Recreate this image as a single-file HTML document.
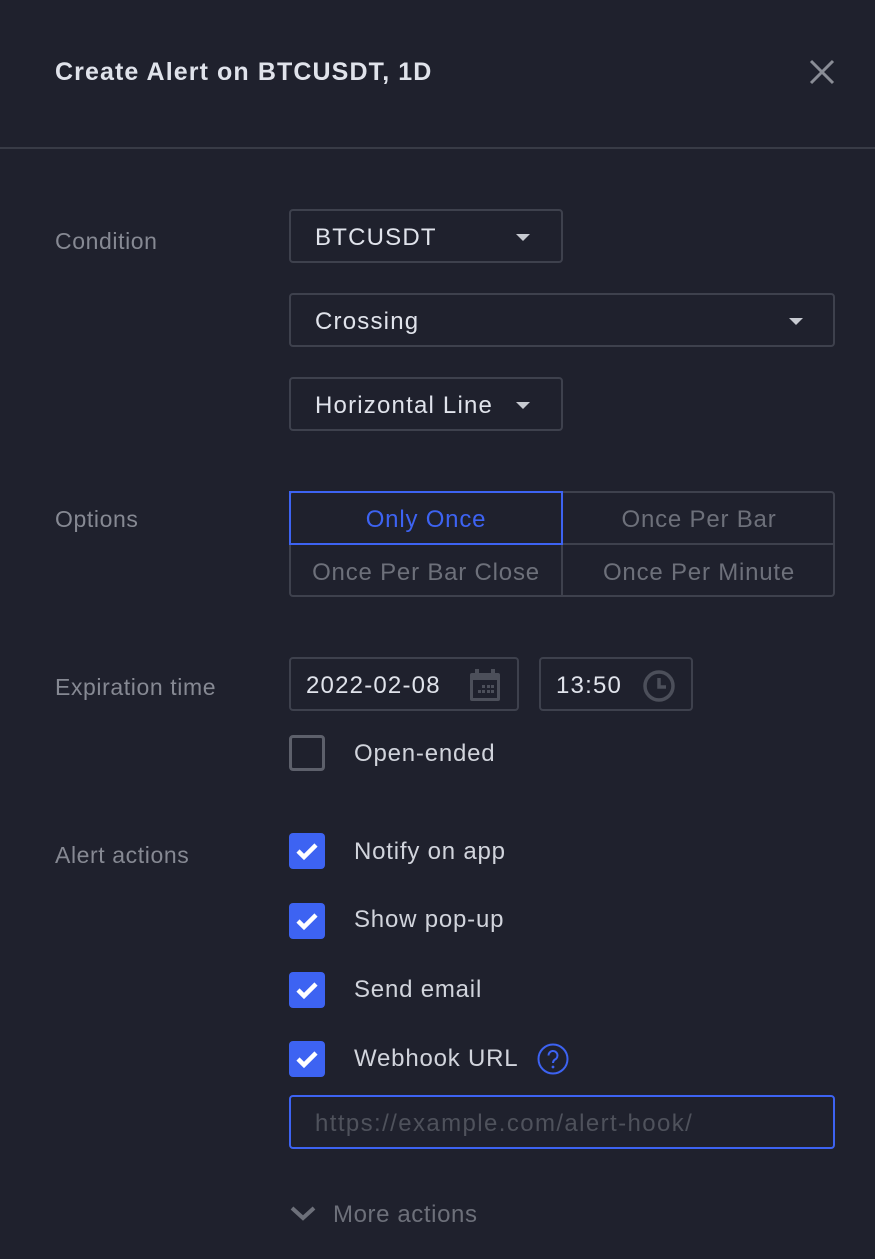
<!DOCTYPE html>
<html><head><style>
*{box-sizing:border-box;margin:0;padding:0}
body{width:875px;height:1259px;background:#1f212d;font-family:"Liberation Sans","DejaVu Sans",sans-serif;position:relative;overflow:hidden;color:#d1d4dc;letter-spacing:1px}
.a{position:absolute}
.lbl{color:#868993;font-size:23px;letter-spacing:0.6px}
.box{position:absolute;border:2px solid #3e414d;border-radius:4px;font-size:24px;color:#e0e3eb;display:flex;align-items:center;padding-left:24px;padding-top:3px;letter-spacing:1.2px}
.caret{position:absolute;width:0;height:0;border-left:7px solid transparent;border-right:7px solid transparent;border-top:7px solid #c7cad1}
.cb{position:absolute;left:289px;width:36px;height:36px;border-radius:4px;background:#3d63f2}
.cbt{position:absolute;left:354px;font-size:24px;color:#d1d4dc;letter-spacing:0.8px}
.opt{position:absolute;display:flex;align-items:center;justify-content:center;font-size:24px;color:#6d707a;padding-top:3px;letter-spacing:0.8px}
</style></head><body>
<div class="a" style="left:55px;top:58px;font-size:25px;font-weight:bold;color:#e0e3eb;letter-spacing:1.1px">Create Alert on BTCUSDT, 1D</div>
<svg class="a" style="left:808px;top:58px" width="28" height="28" viewBox="0 0 28 28"><path d="M3 3L25 25M25 3L3 25" stroke="#8a8d96" stroke-width="3"/></svg>
<div class="a" style="left:0;top:147px;width:875px;height:2px;background:#383b46"></div>

<div class="a lbl" style="left:55px;top:228px">Condition</div>
<div class="box" style="left:289px;top:209px;width:274px;height:54px">BTCUSDT</div><div class="caret" style="left:516px;top:234px"></div>
<div class="box" style="left:289px;top:293px;width:546px;height:54px">Crossing</div><div class="caret" style="left:789px;top:318px"></div>
<div class="box" style="left:289px;top:377px;width:274px;height:54px">Horizontal Line</div><div class="caret" style="left:516px;top:402px"></div>

<div class="a lbl" style="left:55px;top:506px">Options</div>
<div class="a" style="left:289px;top:491px;width:546px;height:106px;border:2px solid #3e414d;border-radius:4px"></div>
<div class="a" style="left:561px;top:491px;width:2px;height:106px;background:#3e414d"></div>
<div class="a" style="left:289px;top:543px;width:546px;height:2px;background:#3e414d"></div>
<div class="opt" style="left:289px;top:491px;width:274px;height:54px;border:2px solid #3d63f2;color:#3d63f2">Only Once</div>
<div class="opt" style="left:563px;top:491px;width:272px;height:54px">Once Per Bar</div>
<div class="opt" style="left:289px;top:545px;width:274px;height:52px">Once Per Bar Close</div>
<div class="opt" style="left:563px;top:545px;width:272px;height:52px">Once Per Minute</div>

<div class="a lbl" style="left:55px;top:674px">Expiration time</div>
<div class="box" style="left:289px;top:657px;width:230px;height:54px;padding-left:15px">2022-02-08</div>
<svg class="a" style="left:469px;top:668px" width="32" height="34" viewBox="0 0 32 34"><rect x="1" y="5" width="30" height="28" rx="2" fill="#4c4f5a"/><rect x="6" y="1" width="4" height="7" fill="#4c4f5a"/><rect x="22" y="1" width="4" height="7" fill="#4c4f5a"/><rect x="4" y="12" width="24" height="18" fill="#1f212d"/><g fill="#4c4f5a"><rect x="13" y="17" width="3" height="3"/><rect x="18" y="17" width="3" height="3"/><rect x="22" y="17" width="3" height="3"/><rect x="9" y="22" width="3" height="3"/><rect x="13" y="22" width="3" height="3"/><rect x="18" y="22" width="3" height="3"/><rect x="22" y="22" width="3" height="3"/></g></svg>
<div class="box" style="left:539px;top:657px;width:154px;height:54px;padding-left:15px">13:50</div>
<svg class="a" style="left:642px;top:669px" width="34" height="34" viewBox="0 0 34 34"><circle cx="17" cy="17" r="14" fill="none" stroke="#4c4f5a" stroke-width="3.5"/><path d="M17 9V18H24" fill="none" stroke="#4c4f5a" stroke-width="3.5"/></svg>
<div class="a" style="left:289px;top:735px;width:36px;height:36px;border:3px solid #5d606b;border-radius:4px"></div>
<div class="cbt" style="top:740px">Open-ended</div>

<div class="a lbl" style="left:55px;top:842px">Alert actions</div>
<div class="cb" style="top:833px"></div><div class="cbt" style="top:838px">Notify on app</div>
<div class="cb" style="top:903px"></div><div class="cbt" style="top:906px">Show pop-up</div>
<div class="cb" style="top:972px"></div><div class="cbt" style="top:976px">Send email</div>
<div class="cb" style="top:1041px"></div><div class="cbt" style="top:1045px">Webhook URL</div>
<svg class="a" style="left:289px;top:833px" width="36" height="280"><g fill="none" stroke="#fff" stroke-width="4.5"><path d="M9 18L15 24L27 12"/><path d="M9 88L15 94L27 82"/><path d="M9 157L15 163L27 151"/><path d="M9 226L15 232L27 220"/></g></svg>
<svg class="a" style="left:537px;top:1043px" width="32" height="32" viewBox="0 0 32 32"><circle cx="16" cy="16" r="14.5" fill="none" stroke="#3d63f2" stroke-width="2"/><path d="M11.5 12.5a4.5 4.5 0 1 1 6.5 4c-1.5 1-2 1.8-2 3.5" fill="none" stroke="#3d63f2" stroke-width="2"/><circle cx="16" cy="24" r="1.4" fill="#3d63f2"/></svg>
<div class="box" style="left:289px;top:1095px;width:546px;height:54px;border-color:#3d63f2;color:#4f525c;letter-spacing:1.4px">https://example.com/alert-hook/</div>
<svg class="a" style="left:289px;top:1204px" width="28" height="18" viewBox="0 0 28 18"><path d="M3 4L14 14L25 4" fill="none" stroke="#6d707a" stroke-width="4"/></svg>
<div class="a" style="left:333px;top:1201px;font-size:24px;color:#6d707a;letter-spacing:0.6px">More actions</div>
</body></html>
